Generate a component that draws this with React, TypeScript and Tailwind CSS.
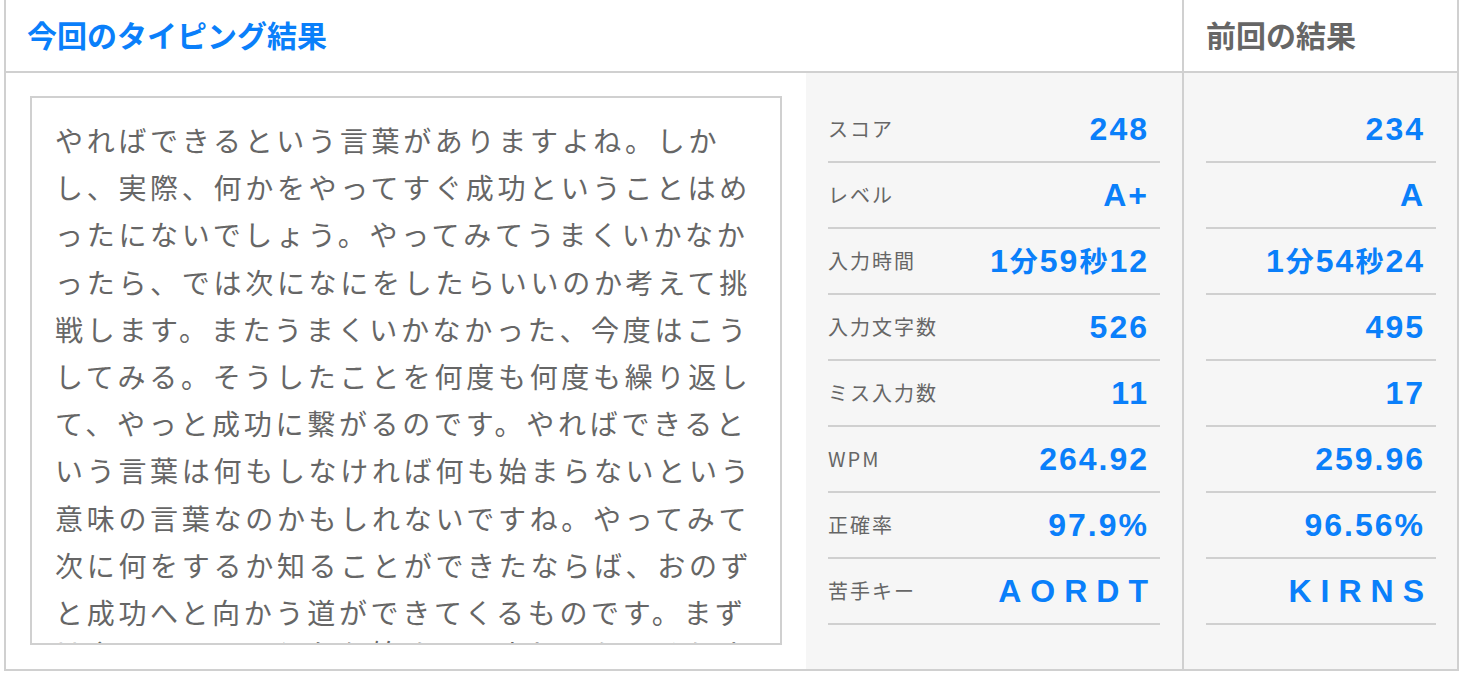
import React from "react";

const lines = [
  "やればできるという言葉がありますよね。しか",
  "し、実際、何かをやってすぐ成功ということはめ",
  "ったにないでしょう。やってみてうまくいかなか",
  "ったら、では次になにをしたらいいのか考えて挑",
  "戦します。またうまくいかなかった、今度はこう",
  "してみる。そうしたことを何度も何度も繰り返し",
  "て、やっと成功に繋がるのです。やればできると",
  "いう言葉は何もしなければ何も始まらないという",
  "意味の言葉なのかもしれないですね。やってみて",
  "次に何をするか知ることができたならば、おのず",
  "と成功へと向かう道ができてくるものです。まず",
  "はやってみることから始めてみましょう。そうす",
];

type Row = { label: string; cur: string; prev: string; keys?: boolean };
const rows: Row[] = [
  { label: "スコア", cur: "248", prev: "234" },
  { label: "レベル", cur: "A+", prev: "A" },
  { label: "入力時間", cur: "1分59秒12", prev: "1分54秒24" },
  { label: "入力文字数", cur: "526", prev: "495" },
  { label: "ミス入力数", cur: "11", prev: "17" },
  { label: "WPM", cur: "264.92", prev: "259.96" },
  { label: "正確率", cur: "97.9%", prev: "96.56%" },
  { label: "苦手キー", cur: "AORDT", prev: "KIRNS", keys: true },
];

const jp = { fontFamily: '"Noto Sans CJK JP", "Noto Sans", sans-serif' };
const val = { fontFamily: '"Liberation Sans", "Noto Sans CJK JP", sans-serif' };

function Value({ v, keys }: { v: string; keys?: boolean }) {
  if (keys) {
    return (
      <div className="flex gap-[9px] text-[32px] leading-none font-bold text-[#0a7ffa] pr-[12px]" style={val}>
        {v.split("").map((c, i) => (
          <span key={i}>{c}</span>
        ))}
      </div>
    );
  }
  const parts = v.split(/([分秒])/);
  return (
    <div className="text-[32px] leading-none font-bold text-[#0a7ffa] tracking-[2px] pr-[11px]" style={val}>
      {parts.map((p, i) =>
        p === "分" || p === "秒" ? (
          <span key={i} className="text-[28px]" style={jp}>
            {p}
          </span>
        ) : (
          <span key={i}>{p}</span>
        )
      )}
    </div>
  );
}

export default function App() {
  return (
    <div className="w-[1466px] h-[676px] bg-white">
      <div className="ml-[4px] w-[1455px] border-x-2 border-b-2 border-[#d0d0d0]">
        {/* header */}
        <div className="flex h-[73px] border-b-2 border-[#d0d0d0]">
          <div className="w-[1176px] pl-[21px] pb-[3px] flex items-center">
            <span className="text-[30px] font-bold text-[#0a7ffa] leading-none" style={jp}>
              今回のタイピング結果
            </span>
          </div>
          <div className="flex-1 border-l-2 border-[#d0d0d0] pl-[22px] pb-[3px] flex items-center">
            <span className="text-[30px] font-bold text-[#666666] leading-none" style={jp}>
              前回の結果
            </span>
          </div>
        </div>
        {/* body */}
        <div className="flex h-[596px]">
          <div className="w-[800px] pl-[24px] pt-[23px]">
            <div className="w-[752px] h-[549px] border-2 border-[#d0d0d0] overflow-hidden pl-[23px] pt-[19px]">
              {lines.map((l, i) => (
                <div
                  key={i}
                  className={
                    "whitespace-nowrap text-[28px] leading-[47.2px] tracking-[3.7px] text-[#666666]" +
                    (i === lines.length - 1 ? " -mt-[6px]" : "")
                  }
                  style={jp}
                >
                  {l}
                </div>
              ))}
            </div>
          </div>
          <div className="w-[376px] bg-[#f6f6f6] px-[22px] pt-[24px]">
            {rows.map((r) => (
              <div
                key={r.label}
                className="h-[66px] border-b-2 border-[#d0d0d0] flex items-center justify-between"
              >
                <span className="text-[20px] tracking-[2px] text-[#666666]" style={jp}>
                  {r.label}
                </span>
                <Value v={r.cur} keys={r.keys} />
              </div>
            ))}
          </div>
          <div className="flex-1 border-l-2 border-[#d0d0d0] bg-[#f6f6f6] pl-[22px] pr-[21px] pt-[24px]">
            {rows.map((r) => (
              <div
                key={r.label}
                className="h-[66px] border-b-2 border-[#d0d0d0] flex items-center justify-end"
              >
                <Value v={r.prev} keys={r.keys} />
              </div>
            ))}
          </div>
        </div>
      </div>
    </div>
  );
}
